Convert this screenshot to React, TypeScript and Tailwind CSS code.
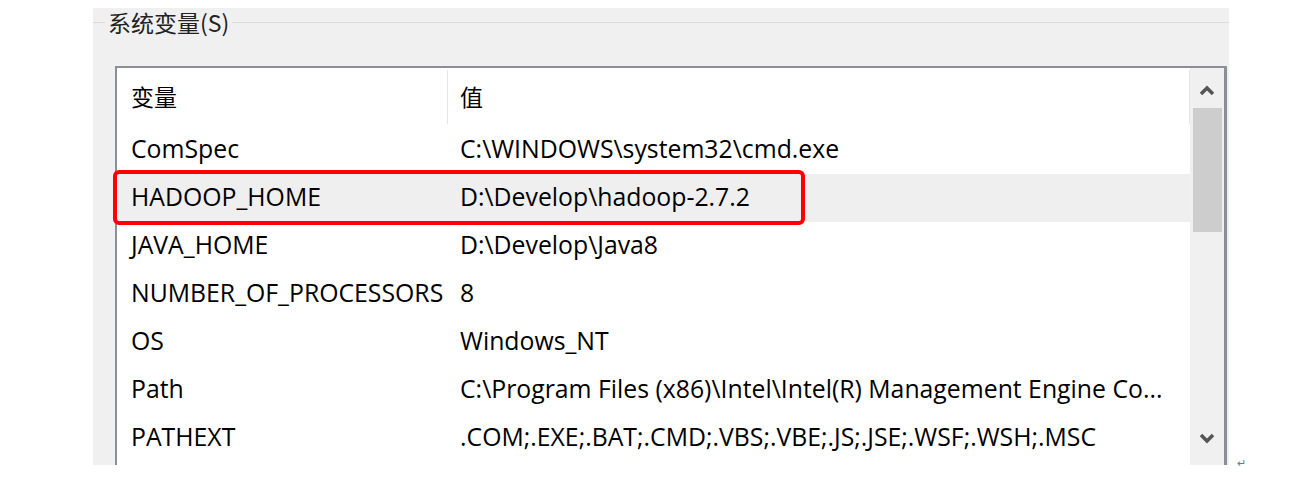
const rows: [string, string][] = [
  ["ComSpec", "C:\\WINDOWS\\system32\\cmd.exe"],
  ["HADOOP_HOME", "D:\\Develop\\hadoop-2.7.2"],
  ["JAVA_HOME", "D:\\Develop\\Java8"],
  ["NUMBER_OF_PROCESSORS", "8"],
  ["OS", "Windows_NT"],
  ["Path", "C:\\Program Files (x86)\\Intel\\Intel(R) Management Engine Co..."],
  ["PATHEXT", ".COM;.EXE;.BAT;.CMD;.VBS;.VBE;.JS;.JSE;.WSF;.WSH;.MSC"],
];

function Chevron({ up }: { up?: boolean }) {
  return (
    <svg width="16" height="11" viewBox="0 0 16 11" className={up ? "" : "rotate-180"}>
      <path d="M2 9 L8 3 L14 9" fill="none" stroke="#555" strokeWidth="3.5" />
    </svg>
  );
}

export default function App() {
  return (
    <div
      className="relative h-[485px] w-[1307px] overflow-hidden bg-white text-black"
      style={{ fontFamily: '"Open Sans", "Noto Sans CJK SC", sans-serif' }}
    >
      <div className="flex items-end pl-[93px] pt-2">
        <div className="h-[457px] w-[1136px] bg-[#f0f0f0]">
          {/* group box title */}
          <div className="flex h-[29px] items-center">
            <div className="h-px w-[12px] bg-[#d9d9d9]" />
            <span
              className="px-[3px] text-[23px] leading-[29px] text-[#222]"
              style={{ fontFamily: '"Noto Sans CJK SC", sans-serif' }}
            >
              系统变量(S)
            </span>
            <div className="h-px flex-1 bg-[#d9d9d9]" />
          </div>

          {/* list view */}
          <div className="ml-[22px] mt-[29px] flex h-[399px] w-[1112px] border-2 border-b-0 border-r-[3px] border-[#8a8f98] bg-white">
            <div className="flex-1">
              <div className="flex h-[58px]">
                <div
                  className="flex w-[330px] items-center pl-[14px] pb-[2px] text-[23px]"
                  style={{ fontFamily: '"Noto Sans CJK SC", sans-serif' }}
                >
                  变量
                </div>
                <div className="mt-[2px] h-[54px] w-px bg-[#e5e5e5]" />
                <div
                  className="flex flex-1 items-center pl-[12px] pb-[2px] text-[23px]"
                  style={{ fontFamily: '"Noto Sans CJK SC", sans-serif' }}
                >
                  值
                </div>
                <div className="mt-[2px] h-[54px] w-px bg-[#e5e5e5]" />
              </div>
              {rows.map(([k, v], i) => (
                <div
                  key={k}
                  className={`relative flex h-[48px] items-center text-[24.8px] ${i === 1 ? "bg-[#efefef]" : ""}`}
                >
                  <div className="w-[330px] whitespace-nowrap pl-[14px] pb-[2px]">{k}</div>
                  <div className="flex-1 whitespace-nowrap pl-[13px] pb-[2px]">{v}</div>
                  {i === 1 && (
                    <div className="absolute left-[-4px] top-[-4px] h-[55px] w-[692px] rounded-[6px] border-[4px] border-[#ff0000]" />
                  )}
                </div>
              ))}
            </div>
            {/* scrollbar */}
            <div className="flex w-[34px] flex-col items-center bg-[#f0f0f0]">
              <div className="flex h-[40px] w-full items-center justify-center pt-[4px]">
                <Chevron up />
              </div>
              <div className="h-[124px] w-[29px] bg-[#cdcdcd]" />
              <div className="flex-1" />
              <div className="flex h-[40px] w-full items-center justify-center pb-[14px]">
                <Chevron />
              </div>
            </div>
          </div>
        </div>
        <span className="mb-[-3px] ml-[8px] text-[11px] leading-none text-[#777]">↵</span>
      </div>
    </div>
  );
}
